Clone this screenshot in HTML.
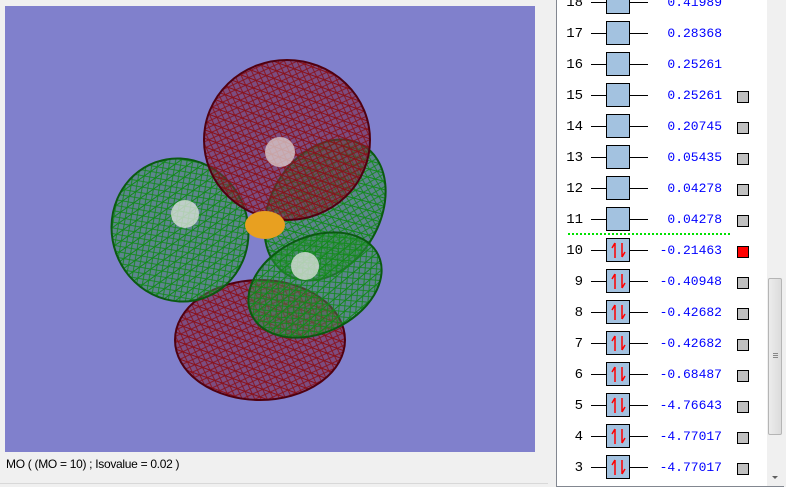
<!DOCTYPE html>
<html><head><style>
body{margin:0;width:786px;height:487px;background:#f0f0f0;position:relative;overflow:hidden;font-family:"Liberation Sans",sans-serif}
#vp{position:absolute;left:5px;top:6px;width:530px;height:446px;background:#8080cc;overflow:hidden}
#cap{position:absolute;left:6px;top:457px;font-size:12px;color:#000;letter-spacing:-0.3px}
#lb{position:absolute;left:0;top:483px;width:548px;height:1px;background:#d8d8d8}
#list{position:absolute;left:556px;top:-2px;width:211px;height:488px;background:#fff;border-left:1px solid #828790;border-bottom:1px solid #828790;overflow:hidden}
#sb{position:absolute;left:767px;top:0;width:17px;height:486px;background:#f0f0f0;border-bottom:1px solid #828790}
#thumb{position:absolute;left:1px;top:278px;width:14px;height:157px;background:linear-gradient(90deg,#ececec,#dcdcdc);border:1px solid #b5b5b5;box-sizing:border-box;border-radius:2px}
.row{position:absolute;left:0;height:26px;width:211px;font-family:"Liberation Mono",monospace;font-size:13px}
.n{position:absolute;right:185px;top:5px;color:#000;font-size:14px}
.ln{position:absolute;left:34px;top:12px;width:57px;height:1px;background:#000}
.bx{position:absolute;left:49px;top:0;width:24px;height:24px;background:#a3c2e0;border:1px solid #000;box-sizing:border-box}
.v{position:absolute;right:46px;top:5px;color:#00f}
.sq{position:absolute;left:180px;top:8px;width:10px;height:10px;border:1px solid #000;background:#c0c0c0}
.sq.r{background:#f00}
</style></head><body>
<div id="vp">
<svg width="530" height="446" viewBox="5 6 530 446">
<defs>
<pattern id="mr" width="8" height="8" patternUnits="userSpaceOnUse" patternTransform="rotate(20)"><rect width="8" height="8" fill="#7a2040" fill-opacity="0.55"/><path d="M0 0L8 8M8 0L0 8M0 4H8" stroke="#8a1018" stroke-width="0.9"/></pattern>
<pattern id="mg" width="8" height="8" patternUnits="userSpaceOnUse" patternTransform="rotate(-15)"><rect width="8" height="8" fill="#3a8a50" fill-opacity="0.5"/><path d="M0 0L8 8M8 0L0 8M0 4H8" stroke="#108a18" stroke-width="0.9"/></pattern>
</defs>
<ellipse cx="260" cy="340" rx="85" ry="60" fill="url(#mr)" stroke="#500010" stroke-width="2"/>
<ellipse cx="180" cy="230" rx="68" ry="72" fill="url(#mg)" stroke="#0a5a10" stroke-width="2" transform="rotate(-20 180 230)"/>
<ellipse cx="325" cy="210" rx="55" ry="75" fill="url(#mg)" stroke="#0a5a10" stroke-width="2" transform="rotate(30 325 210)"/>
<ellipse cx="315" cy="285" rx="70" ry="48" fill="url(#mg)" stroke="#0a5a10" stroke-width="2" transform="rotate(-25 315 285)"/>
<ellipse cx="287" cy="140" rx="83" ry="80" fill="url(#mr)" stroke="#500010" stroke-width="2"/>
<ellipse cx="265" cy="225" rx="20" ry="14" fill="#e8a020"/>
<circle cx="280" cy="152" r="15" fill="#d8c8c8" opacity="0.8"/>
<circle cx="185" cy="214" r="14" fill="#d8e0d8" opacity="0.8"/>
<circle cx="305" cy="266" r="14" fill="#d8e0d8" opacity="0.8"/>
</svg>
</div>
<div id="cap">MO ( (MO = 10) ; Isovalue = 0.02 )</div>
<div id="lb"></div>
<div id="list">
<div class="row" style="top:-8px"><span class="n">18</span><div class="ln"></div><div class="bx"></div><span class="v">0.41989</span></div>
<div class="row" style="top:23px"><span class="n">17</span><div class="ln"></div><div class="bx"></div><span class="v">0.28368</span></div>
<div class="row" style="top:54px"><span class="n">16</span><div class="ln"></div><div class="bx"></div><span class="v">0.25261</span></div>
<div class="row" style="top:85px"><span class="n">15</span><div class="ln"></div><div class="bx"></div><span class="v">0.25261</span><div class="sq"></div></div>
<div class="row" style="top:116px"><span class="n">14</span><div class="ln"></div><div class="bx"></div><span class="v">0.20745</span><div class="sq"></div></div>
<div class="row" style="top:147px"><span class="n">13</span><div class="ln"></div><div class="bx"></div><span class="v">0.05435</span><div class="sq"></div></div>
<div class="row" style="top:178px"><span class="n">12</span><div class="ln"></div><div class="bx"></div><span class="v">0.04278</span><div class="sq"></div></div>
<div class="row" style="top:209px"><span class="n">11</span><div class="ln"></div><div class="bx"></div><span class="v">0.04278</span><div class="sq"></div></div>
<div style="position:absolute;left:11px;top:235px;width:162px;border-top:2px dotted #00e000"></div>
<div class="row" style="top:240px"><span class="n">10</span><div class="ln"></div><div class="bx"><svg width="22" height="22"><path d="M8 4V19M8 4L5 9M15 18V4M15 18L18 13" stroke="#f00" stroke-width="1.5" fill="none"/></svg></div><span class="v">-0.21463</span><div class="sq r"></div></div>
<div class="row" style="top:271px"><span class="n">9</span><div class="ln"></div><div class="bx"><svg width="22" height="22"><path d="M8 4V19M8 4L5 9M15 18V4M15 18L18 13" stroke="#f00" stroke-width="1.5" fill="none"/></svg></div><span class="v">-0.40948</span><div class="sq"></div></div>
<div class="row" style="top:302px"><span class="n">8</span><div class="ln"></div><div class="bx"><svg width="22" height="22"><path d="M8 4V19M8 4L5 9M15 18V4M15 18L18 13" stroke="#f00" stroke-width="1.5" fill="none"/></svg></div><span class="v">-0.42682</span><div class="sq"></div></div>
<div class="row" style="top:333px"><span class="n">7</span><div class="ln"></div><div class="bx"><svg width="22" height="22"><path d="M8 4V19M8 4L5 9M15 18V4M15 18L18 13" stroke="#f00" stroke-width="1.5" fill="none"/></svg></div><span class="v">-0.42682</span><div class="sq"></div></div>
<div class="row" style="top:364px"><span class="n">6</span><div class="ln"></div><div class="bx"><svg width="22" height="22"><path d="M8 4V19M8 4L5 9M15 18V4M15 18L18 13" stroke="#f00" stroke-width="1.5" fill="none"/></svg></div><span class="v">-0.68487</span><div class="sq"></div></div>
<div class="row" style="top:395px"><span class="n">5</span><div class="ln"></div><div class="bx"><svg width="22" height="22"><path d="M8 4V19M8 4L5 9M15 18V4M15 18L18 13" stroke="#f00" stroke-width="1.5" fill="none"/></svg></div><span class="v">-4.76643</span><div class="sq"></div></div>
<div class="row" style="top:426px"><span class="n">4</span><div class="ln"></div><div class="bx"><svg width="22" height="22"><path d="M8 4V19M8 4L5 9M15 18V4M15 18L18 13" stroke="#f00" stroke-width="1.5" fill="none"/></svg></div><span class="v">-4.77017</span><div class="sq"></div></div>
<div class="row" style="top:457px"><span class="n">3</span><div class="ln"></div><div class="bx"><svg width="22" height="22"><path d="M8 4V19M8 4L5 9M15 18V4M15 18L18 13" stroke="#f00" stroke-width="1.5" fill="none"/></svg></div><span class="v">-4.77017</span><div class="sq"></div></div>
</div>
<div id="sb"><div id="thumb"><div style="position:absolute;left:4px;top:74px;width:5px;height:1px;background:#888;box-shadow:0 2px #888,0 4px #888"></div></div>
<div style="position:absolute;left:5px;top:476px;border-left:3px solid transparent;border-right:3px solid transparent;border-top:3px solid #606060"></div></div>
</body></html>
